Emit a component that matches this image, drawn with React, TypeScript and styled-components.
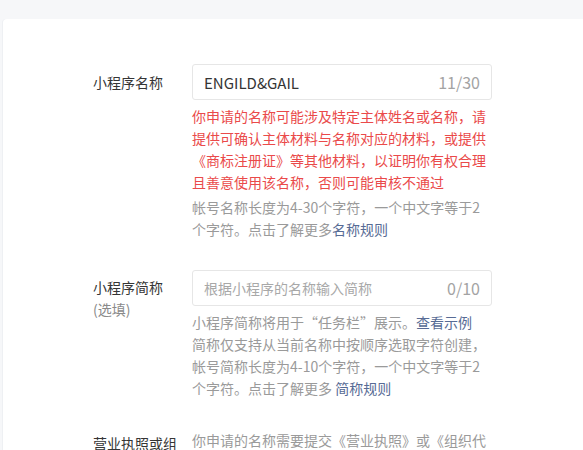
import React from "react";
import styled, { createGlobalStyle } from "styled-components";

const Global = createGlobalStyle`
  html, body { margin: 0; padding: 0; background: #f6f7f9; }
  body { font-family: "Noto Sans CJK SC", "Noto Sans", sans-serif; -webkit-font-smoothing: antialiased; }
`;

const Page = styled.div`
  padding: 19px 0 0 3px;
  height: 450px;
  box-sizing: border-box;
  overflow: hidden;
`;

const Card = styled.div`
  background: #fff;
  border-radius: 4px 0 0 0;
  box-shadow: -1px 0 0 #eef0f3;
  padding: 45px 0 0 90px;
  min-height: 600px;
  display: flex;
  flex-direction: column;
  gap: 30px;
`;

const Row = styled.div`
  display: grid;
  grid-template-columns: 99px 300px;
`;

const Label = styled.div<{ $top: number }>`
  font-size: 14px;
  line-height: 22px;
  color: #353535;
  padding-top: ${(p) => p.$top}px;
  width: 86px;
`;

const Optional = styled.div`
  color: #8a8a8a;
`;

const Field = styled.div`
  display: flex;
  flex-direction: column;
`;

const InputBox = styled.div`
  height: 36px;
  box-sizing: border-box;
  border: 1px solid #e6e6e6;
  border-radius: 3px;
  padding: 0 11px 0 11px;
  display: flex;
  align-items: center;
  justify-content: space-between;
  font-size: 14px;
`;

const Value = styled.span<{ $placeholder?: boolean }>`
  color: ${(p) => (p.$placeholder ? "#a8a8a8" : "#353535")};
  font-size: ${(p) => (p.$placeholder ? 14 : 15)}px;
`;

const Counter = styled.span`
  color: #a3a3a3;
  font-size: 16px;
`;

const Tip = styled.div<{ $error?: boolean; $mt: number }>`
  margin-top: ${(p) => p.$mt}px;
  font-size: 14px;
  line-height: 22px;
  color: ${(p) => (p.$error ? "#ea4a4a" : "#9a9a9a")};
`;

const Link = styled.a`
  color: #576b95;
  text-decoration: none;
`;

export default function App() {
  return (
    <>
      <Global />
      <Page>
        <Card>
          <Row>
            <Label $top={7}>小程序名称</Label>
            <Field>
              <InputBox>
                <Value>ENGILD&amp;GAIL</Value>
                <Counter>11/30</Counter>
              </InputBox>
              <Tip $error $mt={5}>
                你申请的名称可能涉及特定主体姓名或名称，请提供可确认主体材料与名称对应的材料，或提供《商标注册证》等其他材料，以证明你有权合理且善意使用该名称，否则可能审核不通过
              </Tip>
              <Tip $mt={3}>
                帐号名称长度为4-30个字符，一个中文字等于2个字符。点击了解更多<Link>名称规则</Link>
              </Tip>
            </Field>
          </Row>
          <Row>
            <Label $top={6}>
              小程序简称
              <Optional>(选填)</Optional>
            </Label>
            <Field>
              <InputBox>
                <Value $placeholder>根据小程序的名称输入简称</Value>
                <Counter>0/10</Counter>
              </InputBox>
              <Tip $mt={5}>
                小程序简称将用于“任务栏”展示。<Link>查看示例</Link>
                <br />
                简称仅支持从当前名称中按顺序选取字符创建，帐号简称长度为4-10个字符，一个中文字等于2个字符。点击了解更多 <Link>简称规则</Link>
              </Tip>
            </Field>
          </Row>
          <Row>
            <Label $top={3}>营业执照或组织机构代码证</Label>
            <Field>
              <Tip $mt={0}>
                你申请的名称需要提交《营业执照》或《组织代码证》
              </Tip>
            </Field>
          </Row>
        </Card>
      </Page>
    </>
  );
}
